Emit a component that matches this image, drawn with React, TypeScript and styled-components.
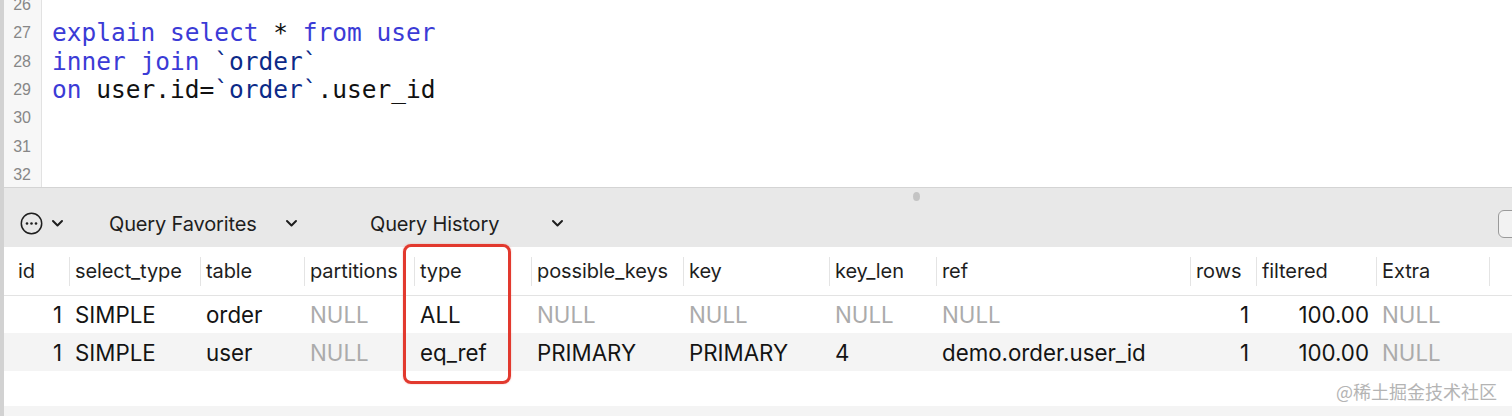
import React from "react";
import styled, { createGlobalStyle } from "styled-components";

const Global = createGlobalStyle`
  html, body { margin: 0; padding: 0; background: #ffffff; overflow: hidden; }
  body { width: 1512px; height: 416px; }
`;

const Page = styled.div`
  position: relative;
  display: flex;
  width: 1512px;
  height: 416px;
  overflow: hidden;
  font-family: Inter, "Liberation Sans", sans-serif;
`;

const LeftStrip = styled.div`
  width: 4px;
  flex: none;
  background: #d2d2d2;
`;

const Main = styled.div`
  flex: 1;
  display: flex;
  flex-direction: column;
  min-width: 0;
  min-height: 0;
`;

const Editor = styled.div`
  display: flex;
  height: 187px;
  overflow: hidden;
  background: #ffffff;
  border-bottom: 1px solid #d4d4d4;
  flex: none;
`;

const Gutter = styled.div`
  width: 27px;
  flex: none;
  background: #f7f7f7;
  border-right: 1px solid #e2e2e2;
  padding-right: 10px;
  box-sizing: content-box;
`;

const LineNums = styled.div`
  margin-top: -9px;
`;

const LineNo = styled.div`
  height: 28.33px;
  line-height: 28.33px;
  text-align: right;
  font-family: "Liberation Sans", Arial, sans-serif;
  font-size: 16px;
  color: #878787;
`;

const Code = styled.div`
  flex: 1;
  padding-left: 10px;
  margin-top: -9px;
  font-family: "DejaVu Sans Mono", "Liberation Mono", monospace;
  font-size: 24.5px;
  color: #111111;
`;

const CodeLine = styled.div`
  height: 28.33px;
  line-height: 28.33px;
  white-space: pre;
`;

const Tok = styled.span<{ $k?: "kw" | "id" }>`
  color: ${(p) => (p.$k === "kw" ? "#3b3bd6" : p.$k === "id" ? "#0c2a88" : "#111111")};
`;

const Toolbar = styled.div`
  position: relative;
  display: flex;
  align-items: center;
  height: 59px;
  box-sizing: border-box;
  padding: 12px 0 0 16px;
  flex: none;
  background: #e8e8e8;
  overflow: hidden;
  color: #1e1e1e;
`;

const Grip = styled.div`
  position: absolute;
  left: 909px;
  top: 4px;
  width: 7px;
  height: 9px;
  border-radius: 50%;
  background: #c4c4c4;
`;

const IconGroup = styled.div`
  display: flex;
  align-items: center;
  gap: 8px;
  margin-right: 45px;
`;

const DropButton = styled.div<{ $w: number; $gap: number }>`
  display: flex;
  align-items: center;
  justify-content: space-between;
  width: ${(p) => p.$w}px;
  margin-right: ${(p) => p.$gap}px;
  font-size: 20px;
  letter-spacing: -0.15px;
`;

const SearchStub = styled.div`
  margin-left: auto;
  margin-right: -20px;
  width: 32px;
  height: 26px;
  border: 1.5px solid #9a9a9a;
  border-radius: 6px;
  background: #f2f2f2;
`;

const Results = styled.div`
  position: relative;
  flex: 1;
  min-height: 0;
  background: #ffffff;
`;

const cols = "65px 131px 104px 110px 117px 152px 146px 107px 254px 66px 120px 113px 1fr";

const HeaderRow = styled.div`
  display: grid;
  grid-template-columns: ${cols};
  height: 49px;
  border-bottom: 1px solid #e3e3e3;
  box-sizing: border-box;
  align-items: start;
`;

const HeadCell = styled.div<{ $first?: boolean }>`
  margin-top: 10px;
  height: 29px;
  line-height: 29px;
  padding-left: ${(p) => (p.$first ? "14px" : "5px")};
  border-left: ${(p) => (p.$first ? "none" : "1px solid #e4e4e4")};
  font-size: 20px;
  letter-spacing: -0.1px;
  color: #1e1e1e;
  white-space: nowrap;
  overflow: hidden;
`;

const Row = styled.div<{ $alt?: boolean; $h: number }>`
  display: grid;
  grid-template-columns: ${cols};
  height: ${(p) => p.$h}px;
  align-items: center;
  background: ${(p) => (p.$alt ? "#f4f4f4" : "#ffffff")};
`;

const Cell = styled.div<{ $right?: boolean; $null?: boolean }>`
  padding: ${(p) => (p.$right ? "0 7px 0 0" : "0 0 0 6px")};
  text-align: ${(p) => (p.$right ? "right" : "left")};
  font-size: 22.3px;
  color: ${(p) => (p.$null ? "#ababab" : "#141414")};
  white-space: nowrap;
  overflow: hidden;
`;

const Highlight = styled.div`
  position: absolute;
  left: 399px;
  top: -3px;
  width: 102px;
  height: 134px;
  border: 3px solid #e2392e;
  border-radius: 8px;
  box-shadow: 0 0 2px rgba(226, 57, 46, 0.35);
  pointer-events: none;
`;

const Watermark = styled.div`
  position: absolute;
  right: 15px;
  bottom: 14px;
  font-family: "Noto Sans CJK SC", "Noto Sans", sans-serif;
  font-size: 18px;
  line-height: 22px;
  color: #b4b4b4;
  text-shadow: 0 0 2px #ffffff;
`;

const EllipsisIcon = () => (
  <svg width="23" height="23" viewBox="0 0 23 23" fill="none">
    <circle cx="11.5" cy="11.5" r="10.2" stroke="#1e1e1e" strokeWidth="1.5" />
    <circle cx="7" cy="11.5" r="1.3" fill="#1e1e1e" />
    <circle cx="11.5" cy="11.5" r="1.3" fill="#1e1e1e" />
    <circle cx="16" cy="11.5" r="1.3" fill="#1e1e1e" />
  </svg>
);

const Chevron = () => (
  <svg width="13" height="9" viewBox="0 0 13 9" fill="none">
    <path d="M2 2 L6.5 6.5 L11 2" stroke="#1e1e1e" strokeWidth="2" strokeLinecap="round" strokeLinejoin="round" />
  </svg>
);

type Val = { t: string; n?: boolean; r?: boolean };

const headers = [
  "id",
  "select_type",
  "table",
  "partitions",
  "type",
  "possible_keys",
  "key",
  "key_len",
  "ref",
  "rows",
  "filtered",
  "Extra",
  "",
];

const rows: Val[][] = [
  [
    { t: "1", r: true },
    { t: "SIMPLE" },
    { t: "order" },
    { t: "NULL", n: true },
    { t: "ALL" },
    { t: "NULL", n: true },
    { t: "NULL", n: true },
    { t: "NULL", n: true },
    { t: "NULL", n: true },
    { t: "1", r: true },
    { t: "100.00", r: true },
    { t: "NULL", n: true },
    { t: "" },
  ],
  [
    { t: "1", r: true },
    { t: "SIMPLE" },
    { t: "user" },
    { t: "NULL", n: true },
    { t: "eq_ref" },
    { t: "PRIMARY" },
    { t: "PRIMARY" },
    { t: "4" },
    { t: "demo.order.user_id" },
    { t: "1", r: true },
    { t: "100.00", r: true },
    { t: "NULL", n: true },
    { t: "" },
  ],
];

export default function App() {
  return (
    <Page>
      <Global />
      <LeftStrip />
      <Main>
        <Editor>
          <Gutter>
            <LineNums>
              {[26, 27, 28, 29, 30, 31, 32].map((n) => (
                <LineNo key={n}>{n}</LineNo>
              ))}
            </LineNums>
          </Gutter>
          <Code>
            <CodeLine> </CodeLine>
            <CodeLine>
              <Tok $k="kw">explain select</Tok> * <Tok $k="kw">from user</Tok>
            </CodeLine>
            <CodeLine>
              <Tok $k="kw">inner join</Tok> <Tok $k="id">`order`</Tok>
            </CodeLine>
            <CodeLine>
              <Tok $k="kw">on</Tok> user.id=<Tok $k="id">`order`</Tok>.user_id
            </CodeLine>
            <CodeLine> </CodeLine>
            <CodeLine> </CodeLine>
            <CodeLine> </CodeLine>
          </Code>
        </Editor>
        <Toolbar>
          <Grip />
          <IconGroup>
            <EllipsisIcon />
            <Chevron />
          </IconGroup>
          <DropButton $w={189} $gap={72}>
            <span>Query Favorites</span>
            <Chevron />
          </DropButton>
          <DropButton $w={194} $gap={0}>
            <span>Query History</span>
            <Chevron />
          </DropButton>
          <SearchStub />
        </Toolbar>
        <Results>
          <HeaderRow>
            {headers.map((h, i) => (
              <HeadCell key={i} $first={i === 0}>
                {h}
              </HeadCell>
            ))}
          </HeaderRow>
          {rows.map((r, i) => (
            <Row key={i} $alt={i % 2 === 1} $h={i === 0 ? 37 : 38}>
              {r.map((c, j) => (
                <Cell key={j} $right={c.r} $null={c.n}>
                  {c.t}
                </Cell>
              ))}
            </Row>
          ))}
          <Row $h={35} />
          <Row $alt $h={38} />
          <Highlight />
          <Watermark>@稀土掘金技术社区</Watermark>
        </Results>
      </Main>
    </Page>
  );
}
